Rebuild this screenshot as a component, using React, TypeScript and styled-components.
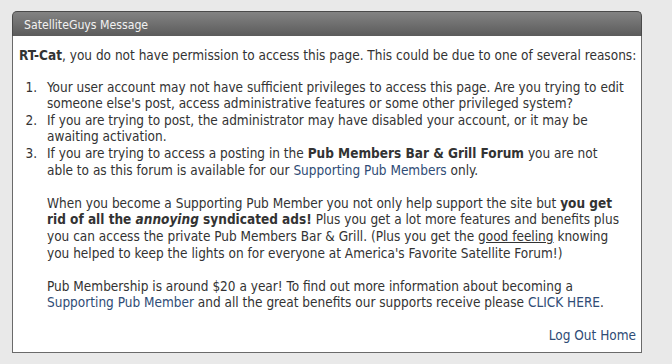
import React from "react";
import styled, { createGlobalStyle } from "styled-components";

const Global = createGlobalStyle`
  html, body { margin: 0; padding: 0; background: #e9e9e9; }
  body { font-family: "DejaVu Sans Condensed", "DejaVu Sans", sans-serif; font-stretch: condensed; }
`;

const Page = styled.div`
  padding: 11px 0 0 12px;
  width: 672px;
  height: 364px;
  box-sizing: border-box;
`;

const Box = styled.div`
  width: 630px;
  height: 342px;
  display: flex;
  flex-direction: column;
  box-sizing: border-box;
`;

const Header = styled.div`
  height: 25px;
  box-sizing: border-box;
  border-radius: 5px 5px 0 0;
  border: 1px solid #4a4a4a;
  border-bottom: none;
  background: linear-gradient(#838383, #5b5b5b);
  color: #f2f2f2;
  font-size: 12.2px;
  line-height: 26px;
  padding-left: 11px;
`;

const Body = styled.div`
  flex: 1;
  background: #fff;
  border: 1px solid #6a6a6a;
  border-top: none;
  padding: 11px 5px 0 6px;
  color: #333;
  font-size: 13.5px;
  line-height: 16.6px;
  display: flex;
  flex-direction: column;
  white-space: nowrap;
`;

const Para = styled.p<{ $top?: number }>`
  margin: ${(p) => p.$top ?? 0}px 0 0 0;
`;

const List = styled.ol`
  margin: 15px 0 0 0;
  padding-left: 28px;
  list-style: none;
  counter-reset: item;
`;

const Item = styled.li`
  counter-increment: item;
  &::before {
    content: counter(item) ".";
    display: inline-block;
    width: 18px;
    margin-left: -28px;
    margin-right: 10px;
    text-align: right;
  }
`;

const Link = styled.a`
  color: #2f4c76;
  text-decoration: none;
`;

const Under = styled.span`
  text-decoration: underline;
`;

const Footer = styled.div`
  margin-top: 16px;
  text-align: right;
`;

export default function App() {
  return (
    <>
      <Global />
      <Page>
        <Box>
          <Header>SatelliteGuys Message</Header>
          <Body>
            <Para>
              <b>RT-Cat</b>, you do not have permission to access this page. This could be due to one of several reasons:
            </Para>
            <List>
              <Item>
                Your user account may not have sufficient privileges to access this page. Are you trying to edit
                <br />
                someone else's post, access administrative features or some other privileged system?
              </Item>
              <Item>
                If you are trying to post, the administrator may have disabled your account, or it may be
                <br />
                awaiting activation.
              </Item>
              <Item>
                If you are trying to access a posting in the <b>Pub Members Bar &amp; Grill Forum</b> you are not
                <br />
                able to as this forum is available for our <Link href="#">Supporting Pub Members</Link> only.
                <Para $top={16.6}>
                  When you become a Supporting Pub Member you not only help support the site but <b>you get</b>
                  <br />
                  <b>
                    rid of all the <i>annoying</i> syndicated ads!
                  </b>{" "}
                  Plus you get a lot more features and benefits plus
                  <br />
                  you can access the private Pub Members Bar &amp; Grill. (Plus you get the <Under>good feeling</Under> knowing
                  <br />
                  you helped to keep the lights on for everyone at America's Favorite Satellite Forum!)
                </Para>
                <Para $top={16.6}>
                  Pub Membership is around $20 a year! To find out more information about becoming a
                  <br />
                  <Link href="#">Supporting Pub Member</Link> and all the great benefits our supports receive please{" "}
                  <Link href="#">CLICK HERE</Link>.
                </Para>
              </Item>
            </List>
            <Footer>
              <Link href="#">Log Out</Link> <Link href="#">Home</Link>
            </Footer>
          </Body>
        </Box>
      </Page>
    </>
  );
}
